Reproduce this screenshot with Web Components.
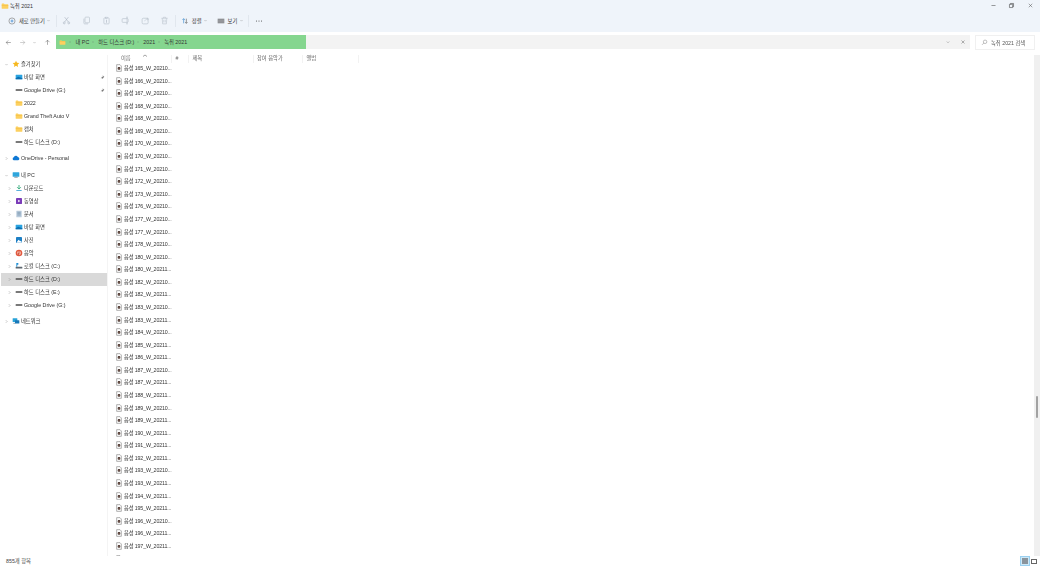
<!DOCTYPE html>
<html lang="ko">
<head>
<meta charset="utf-8">
<title>녹취 2021</title>
<style>
  html, body { margin: 0; height: 100%; background: #fff; }
  body { font: 5.3px "Liberation Sans", "Noto Sans CJK KR", sans-serif; color: #333; overflow: hidden; }
</style>
</head>
<body>
<explorer-window>
  <title-bar slot="top" label="녹취 2021"></title-bar>
  <command-bar slot="top"></command-bar>
  <address-bar slot="top"></address-bar>
  <nav-tree slot="nav"></nav-tree>
  <file-list slot="main"></file-list>
  <status-bar slot="bottom" label="855개 항목"></status-bar>
</explorer-window>

<script>
// small glyph registry, all drawn on a 12x12 box
const GLYPHS = {
  folder: `<path d="M1 3.2a.8.8 0 0 1 .8-.8h2.6l1 1.1h4.8a.8.8 0 0 1 .8.8v4.9a.8.8 0 0 1-.8.8H1.8a.8.8 0 0 1-.8-.8z" fill="#fcd05f"/><path d="M1 4.6h10v.5H1z" fill="#eeb030"/>`,
  star: `<path d="M6 1l1.5 3.2 3.5.4-2.6 2.4.7 3.5L6 8.8l-3.1 1.7.7-3.5L1 4.6l3.5-.4z" fill="#f6b81f"/>`,
  desktop: `<rect x="1" y="2.5" width="10" height="7" rx=".6" fill="#2aa3e0"/><path d="M1 8l4-2.5L11 8v1.5H1z" fill="#0c6fb0"/>`,
  drive: `<rect x="1" y="5" width="10" height="2.2" rx=".4" fill="#4d4d4d"/>`,
  cloud: `<path d="M3 9.5a2.3 2.3 0 0 1-.3-4.5 3.2 3.2 0 0 1 6-.4 2.5 2.5 0 0 1 .5 4.9z" fill="#0f78d4"/>`,
  pc: `<rect x="1" y="2" width="10" height="6.6" rx=".5" fill="#2fa6dc"/><rect x="4" y="8.6" width="4" height="1.2" fill="#7f8b95"/><rect x="3" y="9.6" width="6" height=".8" fill="#a3adb5"/>`,
  download: `<path d="M6 1.5V7M3.2 4.8L6 7.6l2.8-2.8" stroke="#2aa775" stroke-width="1.3" fill="none"/><rect x="2" y="9" width="8" height="1.2" fill="#2f9bd5"/>`,
  video: `<rect x="1.5" y="1.5" width="9" height="9" rx=".6" fill="#7a3bb8"/><path d="M4.8 4v4L8 6z" fill="#fff"/>`,
  docs: `<rect x="2" y="1" width="8" height="10" rx=".5" fill="#b9cbdc"/><path d="M3.5 3.5h5M3.5 5.5h5M3.5 7.5h5" stroke="#5d7f9c" stroke-width=".7"/>`,
  photos: `<rect x="1.5" y="1.5" width="9" height="9" rx=".6" fill="#1d7fc4"/><path d="M2 10l3.2-4.5L8 8l1-1 1.5 3z" fill="#fff"/>`,
  music: `<circle cx="6" cy="6" r="5" fill="#e2583e"/><circle cx="6" cy="6" r="3" fill="#f3b9a9"/><path d="M6 2.8v4.6" stroke="#c23a22"/><circle cx="5" cy="7.6" r="1.2" fill="#c23a22"/>`,
  localdisk: `<rect x="1" y="7" width="10" height="2.6" rx=".4" fill="#5d6770"/><path d="M2 1.5h3v2.8H3.4V7H2z" fill="#1d8fd6"/>`,
  network: `<rect x="1" y="2" width="7" height="5.4" rx=".4" fill="#2aa3d8"/><rect x="4.5" y="4.8" width="6.5" height="5" rx=".4" fill="#1878b8"/><path d="M2 9.5h3" stroke="#7f8b95"/>`,
  audio: `<path d="M2.5 1h5l2 2v8h-7z" fill="#fff" stroke="#6e6e6e" stroke-width=".8"/><rect x="4" y="4.6" width="4" height="4" rx="1.6" fill="#4a3630"/><circle cx="6" cy="6.6" r=".7" fill="#d7a58e"/>`,
  pin: `<path d="M6.8 1.5L10 4.7l-1.2.5L7 7l-.3 1.9-3.3-3.2 1.9-.3 1.8-1.8zM4.6 7L2 9.6" fill="#707070" stroke="#707070" stroke-width=".5"/>`,
  plus: `<circle cx="6" cy="6" r="4.6" fill="none" stroke="#666" stroke-width=".8"/><path d="M6 3.8v4.4M3.8 6h4.4" stroke="#1b76c9" stroke-width=".9"/>`,
  cut: `<path d="M3.5 1.5l5 6.5M8.5 1.5l-5 6.5" stroke="#a9b3bf" stroke-width=".8" fill="none"/><circle cx="3" cy="9.2" r="1.3" fill="none" stroke="#a9b3bf" stroke-width=".8"/><circle cx="9" cy="9.2" r="1.3" fill="none" stroke="#a9b3bf" stroke-width=".8"/>`,
  copy: `<rect x="4" y="1.5" width="6" height="7.5" rx="1" fill="none" stroke="#b4bdc8" stroke-width=".8"/><path d="M2.5 3.5v6a1 1 0 0 0 1 1H8" fill="none" stroke="#b4bdc8" stroke-width=".8"/>`,
  paste: `<rect x="2.5" y="2.5" width="7" height="8" rx="1" fill="none" stroke="#b4bdc8" stroke-width=".8"/><rect x="4.5" y="1.5" width="3" height="2" fill="#dfe6ee" stroke="#b4bdc8" stroke-width=".6"/><path d="M6 5v4" stroke="#b4bdc8"/>`,
  rename: `<rect x="1.5" y="3.5" width="8" height="5" rx="1" fill="none" stroke="#b4bdc8" stroke-width=".8"/><path d="M8 1.5v9M6.8 1.5h2.4M6.8 10.5h2.4" stroke="#b4bdc8" stroke-width=".7"/>`,
  share: `<rect x="1.5" y="3" width="8" height="7.5" rx="1.5" fill="none" stroke="#b4bdc8" stroke-width=".8"/><path d="M5 7c.4-2 2-3 4-3M8 2.4L10.2 4 8 5.6" fill="none" stroke="#b4bdc8" stroke-width=".7"/>`,
  trash: `<path d="M1.8 3h8.4M4.5 3V1.7h3V3M3 3l.5 7.5h5L9 3M5 5v3.5M7 5v3.5" fill="none" stroke="#b4bdc8" stroke-width=".7"/>`,
  sort: `<path d="M4 9.5v-7M2.2 4.3L4 2.5l1.8 1.8" fill="none" stroke="#2a7fc9" stroke-width=".9"/><path d="M8 2.5v7M6.2 7.7L8 9.5l1.8-1.8" fill="none" stroke="#555" stroke-width=".9"/>`,
  view: `<rect x="1" y="2.5" width="10" height="7" fill="#8d8f93"/><path d="M1 5h10M1 7.2h10" stroke="#b5b8bc" stroke-width=".4"/>`,
  more: `<circle cx="2.2" cy="6" r=".8" fill="#444"/><circle cx="6" cy="6" r=".8" fill="#444"/><circle cx="9.8" cy="6" r=".8" fill="#444"/>`,
  search: `<circle cx="7" cy="4.8" r="3" fill="none" stroke="#777" stroke-width=".8"/><path d="M4.8 7l-3 3" stroke="#777" stroke-width=".8"/>`,
  left: `<path d="M10 6H2M5.5 2.5L2 6l3.5 3.5" fill="none" stroke="#666" stroke-width=".9"/>`,
  right: `<path d="M2 6h8M6.5 2.5L10 6 6.5 9.5" fill="none" stroke="#a5a5a5" stroke-width=".9"/>`,
  up: `<path d="M6 10V2M2.5 5.5L6 2l3.5 3.5" fill="none" stroke="#666" stroke-width=".9"/>`,
  down: `<path d="M3.5 5L6 7.5 8.5 5" fill="none" stroke="#777" stroke-width=".9"/>`,
  chev: `<path d="M4.5 3l3 3-3 3" fill="none" stroke="#666" stroke-width=".9"/>`,
  close: `<path d="M3 3l6 6M9 3L3 9" fill="none" stroke="#555" stroke-width=".9"/>`,
  min: `<path d="M2.5 6h7" stroke="#444" stroke-width=".9"/>`,
  restore: `<path d="M2.5 4H8v5.5H2.5zM4.2 4V2.5h5.3V8H8" fill="none" stroke="#333" stroke-width=".9"/>`,
};

function glyph(name, size) {
  return `<svg viewBox="0 0 12 12" width="${size}" height="${size}" style="display:block;flex:none">${GLYPHS[name] || ''}</svg>`;
}

class ExplorerWindow extends HTMLElement {
  constructor() {
    super();
    this.attachShadow({ mode: 'open' }).innerHTML = `
      <style>
        :host { display: flex; flex-direction: column; height: 566px; width: 1040px; filter: blur(.25px); }
        .mid { flex: 1; min-height: 0; display: flex; }
        .nav { width: 107px; flex: none; border-right: 1px solid #f4f4f4; }
        .main { flex: 1; min-width: 0; }
      </style>
      <slot name="top"></slot>
      <div class="mid">
        <div class="nav"><slot name="nav"></slot></div>
        <div class="main"><slot name="main"></slot></div>
      </div>
      <slot name="bottom"></slot>`;
  }
}

class TitleBar extends HTMLElement {
  connectedCallback() {
    this.attachShadow({ mode: 'open' }).innerHTML = `
      <style>
        :host { display: flex; align-items: center; height: 11px; background: #eff4fa; padding-left: 1px; gap: 1px; }
        .name { flex: 1; }
        .btns { display: flex; gap: 11.5px; padding-right: 6.5px; }
      </style>
      ${glyph('folder', 8)}
      <span class="name">${this.getAttribute('label')}</span>
      <span class="btns">${glyph('min', 7)}${glyph('restore', 7)}${glyph('close', 7)}</span>`;
  }
}

class CommandBar extends HTMLElement {
  connectedCallback() {
    const faint = ['cut', 'copy', 'paste', 'rename', 'share', 'trash'];
    this.attachShadow({ mode: 'open' }).innerHTML = `
      <style>
        :host { display: flex; align-items: center; height: 21px; background: #eff4fa; padding: 0 0 2px 8px; box-sizing: border-box; }
        .cmd { display: flex; align-items: center; gap: 3px; }
        .caret { margin-left: -1.5px; }
        .sep { width: 1px; height: 12px; background: #e1e7ee; }
        .faint { display: flex; gap: 10.6px; margin: 0 6px 0 5px; }
      </style>
      <span class="cmd">${glyph('plus', 8)}<span>새로 만들기</span><span class="caret">${glyph('down', 5)}</span></span>
      <span class="sep" style="margin-left:5px"></span>
      <span class="faint">${faint.map(n => glyph(n, 9)).join('')}</span>
      <span class="sep"></span>
      <span class="cmd" style="margin-left:4.5px">${glyph('sort', 8)}<span>정렬</span><span class="caret">${glyph('down', 5)}</span></span>
      <span class="cmd" style="margin-left:8.5px">${glyph('view', 8)}<span>보기</span><span class="caret">${glyph('down', 5)}</span></span>
      <span class="sep" style="margin-left:4.5px"></span>
      <span style="margin-left:5.5px">${glyph('more', 8)}</span>`;
  }
}

class AddressBar extends HTMLElement {
  connectedCallback() {
    const crumbs = ['내 PC', '하드 디스크 (D:)', '2021', '녹취 2021'];
    this.attachShadow({ mode: 'open' }).innerHTML = `
      <style>
        :host { display: flex; align-items: flex-start; height: 23px; padding: 3px 5px 0; box-sizing: border-box; background: #fff; }
        .arrows { display: flex; gap: 6.5px; width: 51px; height: 14px; flex: none; align-items: center; }
        .box { flex: 1; height: 14px; display: flex; align-items: center; background: #f3f3f3; }
        .fill { width: 250px; height: 100%; background: #85d68f; display: flex; align-items: center; padding-left: 3px; box-sizing: border-box; gap: 1.5px; }
        .fill svg:first-child { margin-right: .5px; }
        .crumb { display: flex; align-items: center; gap: 3px; }
        .tail { margin-left: auto; display: flex; gap: 9px; padding-right: 4px; }
        .search { width: 60px; height: 15px; margin-left: 5px; border: 1px solid #f0f0f0; box-sizing: border-box; display: flex; align-items: center; gap: 3px; padding-left: 5px; color: #555; }
      </style>
      <span class="arrows">${glyph('left', 7)}${glyph('right', 7)}${glyph('down', 5)}${glyph('up', 7)}</span>
      <div class="box">
        <div class="fill">${glyph('folder', 7)}${crumbs.map(c => `<span class="crumb">${glyph('chev', 4)}<span>${c}</span></span>`).join('')}</div>
        <span class="tail">${glyph('down', 6)}${glyph('close', 6)}</span>
      </div>
      <div class="search">${glyph('search', 7)}<span>녹취 2021 검색</span></div>`;
  }
}

class TreeItem extends HTMLElement {
  connectedCallback() {
    const arrow = this.getAttribute('arrow');
    const pin = this.hasAttribute('pin');
    this.attachShadow({ mode: 'open' }).innerHTML = `
      <style>
        :host { display: flex; align-items: center; height: 13px; box-sizing: border-box; padding-left: var(--indent, 3px); gap: 1.5px; white-space: nowrap; }
        :host([selected]) { background: #d9d9d9; }
        .arrow { width: 5px; flex: none; margin-right: 1px; }
        .label { flex: 1; }
        .pin { margin-right: 2px; }
      </style>
      <span class="arrow">${arrow ? glyph(arrow, 5) : ''}</span>
      ${glyph(this.getAttribute('icon'), 8)}
      <span class="label"><slot></slot></span>
      ${pin ? `<span class="pin">${glyph('pin', 5)}</span>` : ''}`;
  }
}

class NavTree extends HTMLElement {
  connectedCallback() {
    const rows = [
      ['즐겨찾기', 'star', 'down', 0],
      ['바탕 화면', 'desktop', '', 1, 'pin'],
      ['Google Drive (G:)', 'drive', '', 1, 'pin'],
      ['2022', 'folder', '', 1],
      ['Grand Theft Auto V', 'folder', '', 1],
      ['캡처', 'folder', '', 1],
      ['하드 디스크 (D:)', 'drive', '', 1],
      ['gap', 3],
      ['OneDrive - Personal', 'cloud', 'chev', 0],
      ['gap', 4],
      ['내 PC', 'pc', 'down', 0],
      ['다운로드', 'download', 'chev', 1],
      ['동영상', 'video', 'chev', 1],
      ['문서', 'docs', 'chev', 1],
      ['바탕 화면', 'desktop', 'chev', 1],
      ['사진', 'photos', 'chev', 1],
      ['음악', 'music', 'chev', 1],
      ['로컬 디스크 (C:)', 'localdisk', 'chev', 1],
      ['하드 디스크 (D:)', 'drive', 'chev', 1, 'selected'],
      ['하드 디스크 (E:)', 'drive', 'chev', 1],
      ['Google Drive (G:)', 'drive', 'chev', 1],
      ['gap', 3],
      ['네트워크', 'network', 'chev', 0],
    ];
    const html = rows.map(r => {
      if (r[0] === 'gap') return `<div style="height:${r[1]}px"></div>`;
      const [text, icon, arrow, depth, flag] = r;
      return `<tree-item style="--indent:${depth ? 6 : 3}px" icon="${icon}" arrow="${arrow}" ${flag || ''}>${text}</tree-item>`;
    }).join('');
    this.attachShadow({ mode: 'open' }).innerHTML = `
      <style>
        :host { display: block; padding: 2.5px 0 0 1px; }
      </style>
      ${html}`;
  }
}

class FileRow extends HTMLElement {
  connectedCallback() {
    this.attachShadow({ mode: 'open' }).innerHTML = `
      <style>
        :host { display: flex; align-items: center; height: 12.58px; padding-left: 7px; gap: 1px; white-space: nowrap; letter-spacing: -.15px; }
      </style>
      ${glyph('audio', 8)}<span><slot></slot></span>`;
  }
}

class FileList extends HTMLElement {
  connectedCallback() {
    const files = ['165_W_20210','166_W_20210','167_W_20210','168_W_20210','168_W_20210','169_W_20210','170_W_20210','170_W_20210','171_W_20210','172_W_20210','173_W_20210','176_W_20210','177_W_20210','177_W_20210','178_W_20210','180_W_20210','180_W_20211','182_W_20210','182_W_20211','183_W_20210','183_W_20211','184_W_20210','185_W_20211','186_W_20211','187_W_20210','187_W_20211','188_W_20211','189_W_20210','189_W_20211','190_W_20211','191_W_20211','192_W_20211','193_W_20210','193_W_20211','194_W_20211','195_W_20211','196_W_20210','196_W_20211','197_W_20211'];
    const cols = [['이름', 64], ['#', 17], ['제목', 64.5], ['참여 음악가', 49.5], ['앨범', 56]];
    this.attachShadow({ mode: 'open' }).innerHTML = `
      <style>
        :host { display: flex; height: 100%; }
        .content { flex: 1; min-width: 0; display: flex; flex-direction: column; }
        .head { display: flex; height: 8px; flex: none; position: relative; color: #666; }
        .col { box-sizing: border-box; padding-left: 13px; line-height: 7px; height: 8px; border-right: 1px solid #f2f2f2; }
        .col + .col { padding-left: 3.5px; }
        .sort { position: absolute; left: 33.5px; top: -1.5px; }
        .rows { flex: 1; overflow: hidden; margin-top: -1.3px; }
        .track { width: 6px; flex: none; background: #f0f0f0; position: relative; }
        .thumb { position: absolute; left: 1.8px; top: 341px; width: 2px; height: 22px; background: #a2a2a2; border-radius: 1px; }
      </style>
      <div class="content">
        <div class="head">
          ${cols.map(([t, w]) => `<span class="col" style="width:${w}px">${t}</span>`).join('')}
          <svg class="sort" viewBox="0 0 12 6" width="6" height="3"><path d="M2 5l4-3 4 3" fill="none" stroke="#666" stroke-width="1.2"/></svg>
        </div>
        <div class="rows">${files.map(f => `<file-row>음성 ${f}...</file-row>`).join('')}<file-row></file-row></div>
      </div>
      <div class="track"><div class="thumb"></div></div>`;
  }
}

class StatusBar extends HTMLElement {
  connectedCallback() {
    this.attachShadow({ mode: 'open' }).innerHTML = `
      <style>
        :host { display: flex; align-items: center; height: 10px; padding: 0 2.5px 0 6px; background: #fff; }
        .label { flex: 1; color: #444; }
        .btn { height: 10px; box-sizing: border-box; display: flex; align-items: center; justify-content: center; }
        .on { width: 10px; background: #cde8f7; border: 1px solid #9ad0f0; }
        .off { width: 7.5px; }
        .tile { width: 5.5px; height: 5.5px; background: #8a949c; }
        .box { width: 5.5px; height: 5px; border: 1px solid #666; box-sizing: border-box; }
      </style>
      <span class="label">${this.getAttribute('label')}</span>
      <span class="btn on"><span class="tile"></span></span>
      <span class="btn off"><span class="box"></span></span>`;
  }
}

customElements.define('explorer-window', ExplorerWindow);
customElements.define('title-bar', TitleBar);
customElements.define('command-bar', CommandBar);
customElements.define('address-bar', AddressBar);
customElements.define('tree-item', TreeItem);
customElements.define('nav-tree', NavTree);
customElements.define('file-row', FileRow);
customElements.define('file-list', FileList);
customElements.define('status-bar', StatusBar);
</script>
</body>
</html>
